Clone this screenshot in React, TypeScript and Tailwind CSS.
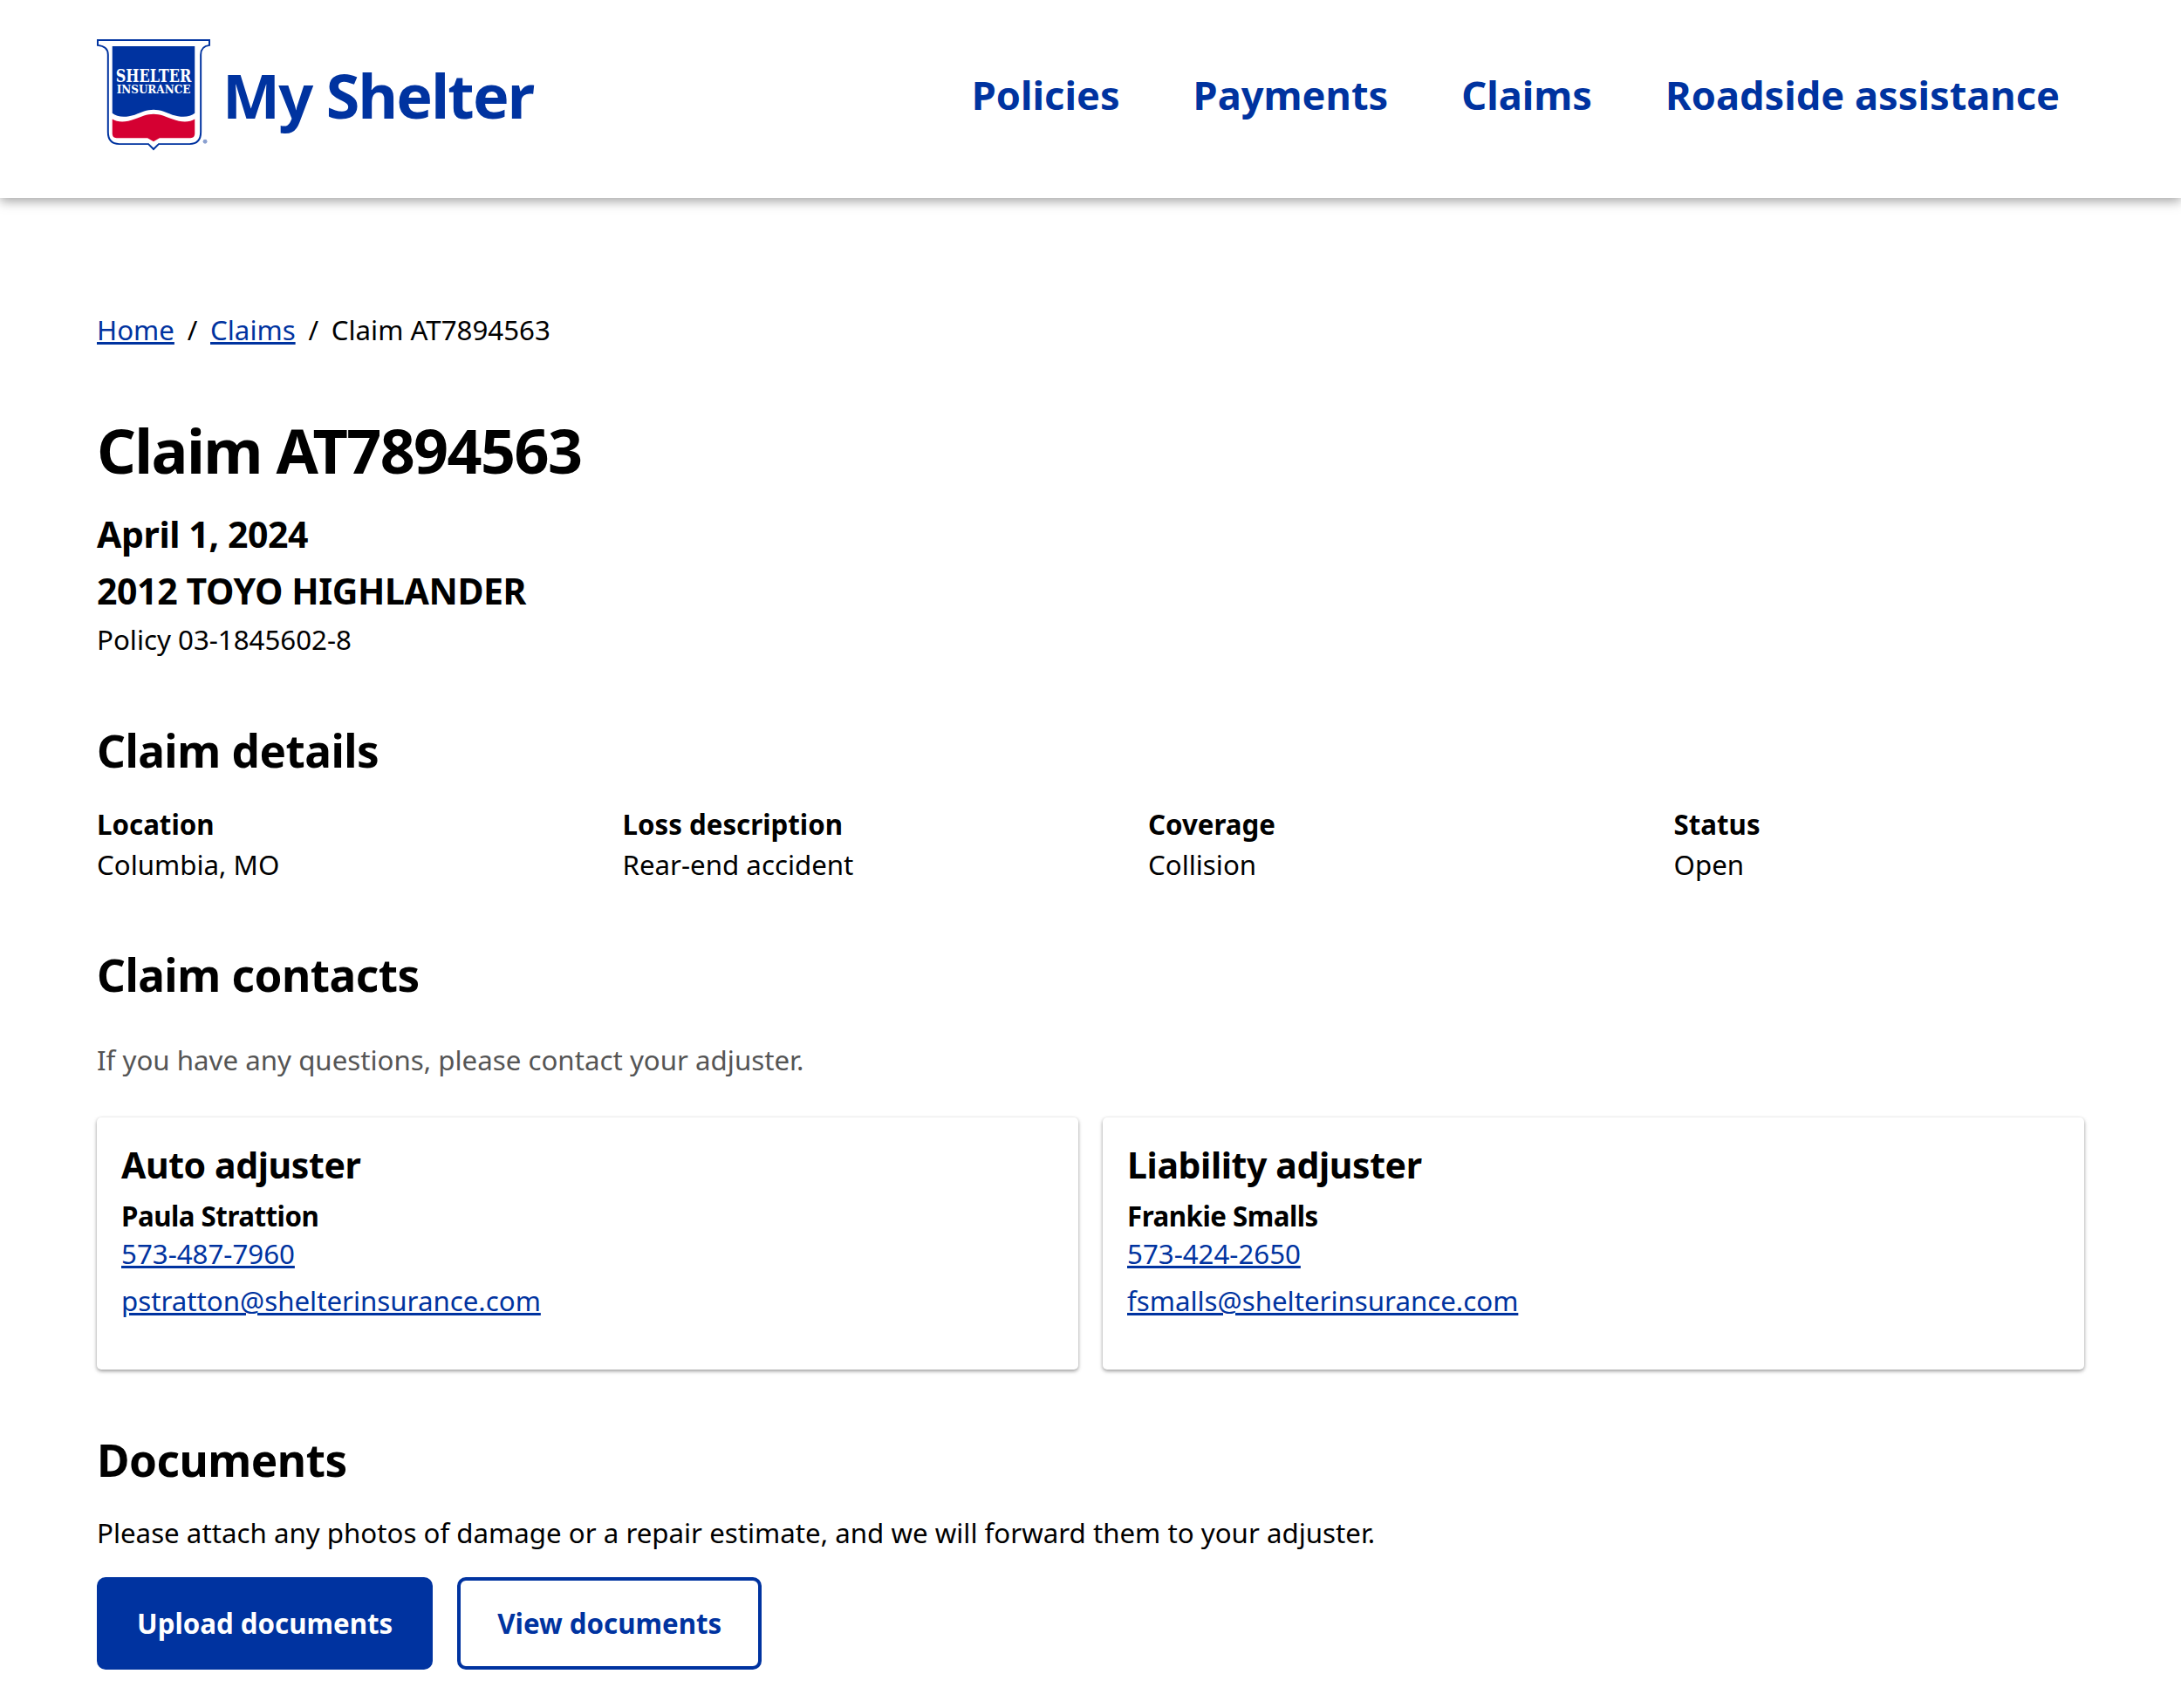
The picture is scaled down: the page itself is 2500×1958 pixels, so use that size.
export default function App() {
  const blue = "text-[#0033a0]";
  const Card = ({ title, name, phone, email }: { title: string; name: string; phone: string; email: string }) => (
    <div className="bg-white rounded-[5px] h-[289px] px-[28px] pt-[26px] shadow-[0_2px_4px_rgba(0,0,0,0.38),0_0_3px_rgba(0,0,0,0.06)]">
      <h3 className="text-[41px] leading-[56px] font-bold tracking-[-0.4px]">{title}</h3>
      <div className="mt-[9px] text-[31.25px] leading-[44px] font-bold tracking-[-0.5px]">{name}</div>
      <a className={`block text-[31.25px] leading-[43px] underline ${blue}`}>{phone}</a>
      <a className={`block mt-[11px] text-[31.25px] leading-[43px] underline ${blue}`}>{email}</a>
    </div>
  );
  const Detail = ({ k, v }: { k: string; v: string }) => (
    <div>
      <div className="text-[31.25px] leading-[46px] font-bold">{k}</div>
      <div className="text-[31.25px] leading-[46px]">{v}</div>
    </div>
  );
  return (
    <div className="w-[2500px] h-[1958px] bg-white text-black font-['Noto_Sans',sans-serif] overflow-hidden">
      <header className="h-[227px] flex items-center justify-between pl-[111px] pr-[139px] bg-white shadow-[0_4px_12px_rgba(0,0,0,0.35)]">
        <div className="flex items-center gap-[14px] -mt-[10px]">
          <svg width="130" height="128" viewBox="0 0 132 130" className="mt-[1px]">
            <path d="M1 1H131V7Q121 8 121 18V108Q121 122 108 122H72L66 128L60 122H26Q13 122 13 108V18Q13 8 1 7Z" fill="#fff" stroke="#0033a0" strokeWidth="2" />
            <path d="M18 8H114V86C108 91 98 91 88 88C80 85 74 82 66 82C58 82 52 85 44 88C34 91 24 91 18 86Z" fill="#0033a0" />
            <path d="M18 93C24 97 34 97 44 93C52 90 58 87 66 87C74 87 80 90 88 93C98 97 108 97 114 93V110Q114 115 109 115H73L66 119L59 115H23Q18 115 18 110Z" fill="#d50032" />
            <text x="22" y="50" fill="#fff" className="font-['DejaVu_Serif',serif]" fontWeight="700" fontSize="20" textLength="88" lengthAdjust="spacingAndGlyphs">SHELTER</text>
            <text x="23" y="63" fill="#fff" className="font-['DejaVu_Serif',serif]" fontWeight="700" fontSize="14" textLength="86" lengthAdjust="spacingAndGlyphs">INSURANCE</text>
            <circle cx="126" cy="119" r="2.5" fill="#8aa0d0" />
          </svg>
          <span className={`text-[70px] leading-none font-bold tracking-[-1.8px] ${blue}`}>My Shelter</span>
        </div>
        <nav className={`-mt-[10px] flex gap-[84px] text-[45.2px] leading-none font-bold ${blue}`}>
          <a>Policies</a>
          <a>Payments</a>
          <a>Claims</a>
          <a>Roadside assistance</a>
        </nav>
      </header>
      <main className="px-[111px]">
        <nav className="mt-[128px] flex gap-[14.75px] text-[31.25px] leading-[46px]">
          <a className={`underline ${blue}`}>Home</a>
          <span>/</span>
          <a className={`underline ${blue}`}>Claims</a>
          <span>/</span>
          <span>Claim AT7894563</span>
        </nav>
        <h1 className="mt-[67px] text-[70px] leading-[96px] font-bold tracking-[-1.6px]">Claim AT7894563</h1>
        <div className="mt-[19px] text-[41px] leading-[58px] font-bold tracking-[-0.4px]">April 1, 2024</div>
        <div className="mt-[7px] text-[41px] leading-[58px] font-bold tracking-[-0.4px]">2012 TOYO HIGHLANDER</div>
        <div className="mt-[4px] text-[31.25px] leading-[46px]">Policy 03-1845602-8</div>
        <h2 className="mt-[69px] text-[51.25px] leading-[70px] font-bold tracking-[-0.5px]">Claim details</h2>
        <div className="mt-[27px] grid grid-cols-4 gap-x-[132px]">
          <Detail k="Location" v="Columbia, MO" />
          <Detail k="Loss description" v="Rear-end accident" />
          <Detail k="Coverage" v="Collision" />
          <Detail k="Status" v="Open" />
        </div>
        <h2 className="mt-[68px] text-[51.25px] leading-[70px] font-bold tracking-[-0.5px]">Claim contacts</h2>
        <p className="mt-[40px] text-[31.25px] leading-[46px] text-[#555]">If you have any questions, please contact your adjuster.</p>
        <div className="mt-[43px] grid grid-cols-2 gap-[28px]">
          <Card title="Auto adjuster" name="Paula Strattion" phone="573-487-7960" email="pstratton@shelterinsurance.com" />
          <Card title="Liability adjuster" name="Frankie Smalls" phone="573-424-2650" email="fsmalls@shelterinsurance.com" />
        </div>
        <h2 className="mt-[68px] text-[51.25px] leading-[70px] font-bold tracking-[-0.5px]">Documents</h2>
        <p className="mt-[26px] text-[31.25px] leading-[46px]">Please attach any photos of damage or a repair estimate, and we will forward them to your adjuster.</p>
        <div className="mt-[28px] flex gap-[28px]">
          <button className="h-[106px] px-[46px] rounded-[10px] bg-[#0033a0] text-white text-[31.25px] font-bold">Upload documents</button>
          <button className={`h-[106px] px-[42px] rounded-[10px] border-[4px] border-[#0033a0] bg-white text-[31.25px] font-bold ${blue}`}>View documents</button>
        </div>
      </main>
    </div>
  );
}
